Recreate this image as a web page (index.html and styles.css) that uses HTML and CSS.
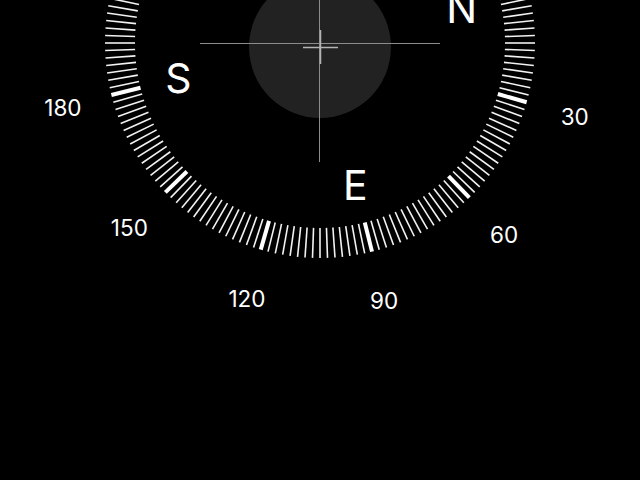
FILE: index.html
```html
<!doctype html>
<html><head>
	<title>Compass</title>
	<meta http-equiv="Content-Type" content="text/html; charset=utf-8">
<link rel="stylesheet" href="styles.css">
</head><body>
	<div class="screen">
		<svg id="dial" class="dial" width="640" height="480" viewBox="0 0 640 480">
			<circle class="level" cx="320" cy="47" r="71"></circle>
			<line class="cross" x1="200" y1="43.5" x2="440" y2="43.5"></line>
			<line class="cross" x1="319.5" y1="0" x2="319.5" y2="162"></line>
			<line class="bubble" x1="303" y1="47.5" x2="338" y2="47.5"></line>
			<line class="bubble" x1="320.5" y1="30" x2="320.5" y2="64"></line>
			<g id="ticks"></g>
			<g id="labels"></g>
		</svg>
	</div>
	<script>

var CX = 320, CY = 43, TURN = -14;
var NS = 'http://www.w3.org/2000/svg';

function pt(deg, r) {
	var a = (deg + TURN) * Math.PI / 180;
	return [CX + r * Math.cos(a), CY + r * Math.sin(a)];
}

function add(parent, tag, attrs, text) {
	var el = document.createElementNS(NS, tag);
	for (var k in attrs) el.setAttribute(k, attrs[k]);
	if (text) el.textContent = text;
	parent.appendChild(el);
	return el;
}

var ticks = document.getElementById('ticks');
for (var d = 0; d < 360; d += 2) {
	var a = pt(d, 185), b = pt(d, 215);
	add(ticks, 'line', {
		x1: a[0], y1: a[1], x2: b[0], y2: b[1],
		'class': d % 30 == 0 ? 'tick major' : 'tick'
	});
}

// only the labels that land inside the window
var labels = document.getElementById('labels');
for (var n = 30; n <= 180; n += 30) {
	var p = pt(n, 265);
	add(labels, 'text', { x: p[0], y: p[1] + 9, 'class': 'degree' }, String(n));
}

// N sits half off the top edge, as on the device
var points = ['N', 'E', 'S'];
for (var i = 0; i < points.length; i++) {
	var q = pt(i * 90, 146);
	add(labels, 'text', { x: q[0], y: q[1] + 15, 'class': 'cardinal' }, points[i]);
}

	</script>
</body></html>
```

FILE: styles.css
```css
html, body {
	margin: 0;
	padding: 0;
	background: #000;
	overflow: hidden;
}

.screen {
	position: relative;
	width: 640px;
	height: 480px;
	background: #000;
}

.dial {
	position: absolute;
	top: 0;
	left: 0;
	display: block;
}

.level {
	fill: #222222;
}

.cross {
	stroke: #8c8c8c;
	stroke-width: 1;
}

.bubble {
	stroke: #b4b4b4;
	stroke-width: 1.5;
}

.tick {
	stroke: #f2f2f2;
	stroke-width: 1.6;
}

.tick.major {
	stroke: #ffffff;
	stroke-width: 4;
}

.degree {
	fill: #ffffff;
	font: 400 22.5px Inter, 'Liberation Sans', sans-serif;
	text-anchor: middle;
}

.cardinal {
	fill: #ffffff;
	font: 400 41px Inter, 'Liberation Sans', sans-serif;
	text-anchor: middle;
}
```
